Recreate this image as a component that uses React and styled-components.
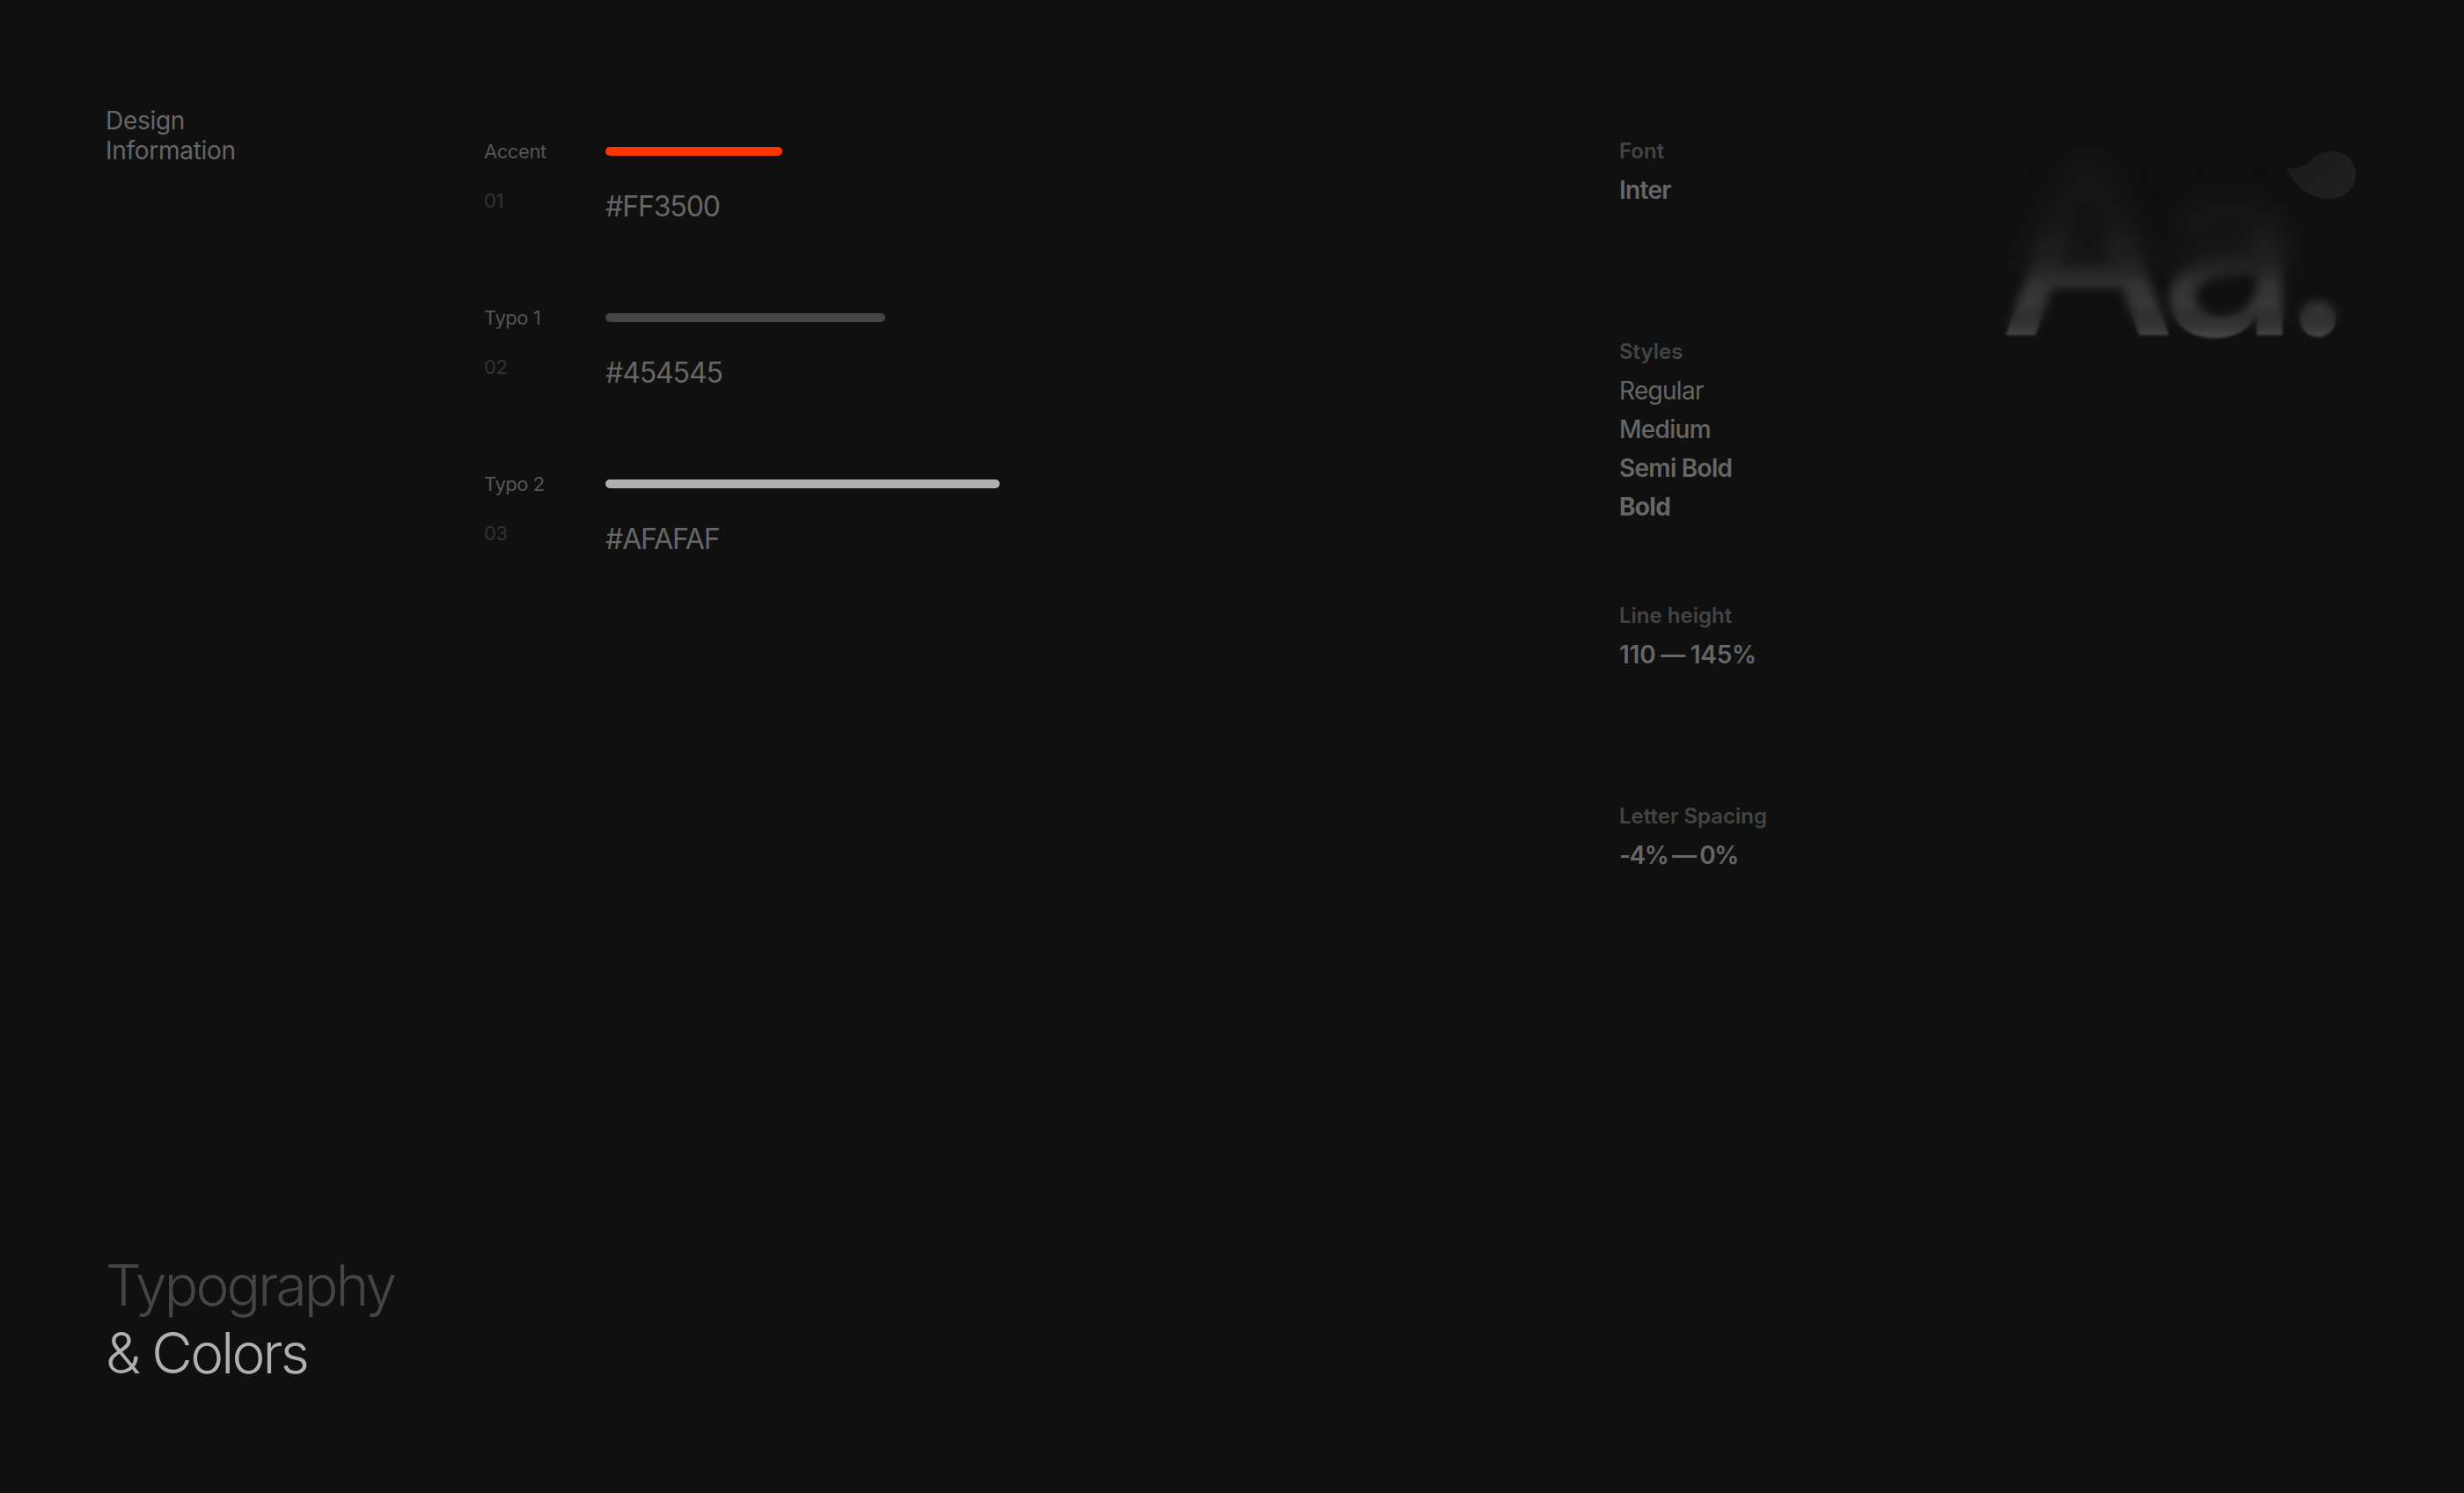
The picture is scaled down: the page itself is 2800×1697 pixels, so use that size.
import styled, { createGlobalStyle } from 'styled-components'

const GlobalStyle = createGlobalStyle`
  html, body {
    margin: 0;
    padding: 0;
    background: #101010;
  }
  body {
    font-family: 'Inter', 'Liberation Sans', sans-serif;
    -webkit-font-smoothing: antialiased;
  }
`

const Page = styled.main`
  display: grid;
  grid-template-columns: 430px 1290px 1fr;
  box-sizing: border-box;
  width: 2800px;
  height: 1697px;
  padding: 120px 0 121px 120px;
  background: #101010;
  overflow: hidden;
`

const IntroColumn = styled.section`
  display: flex;
  flex-direction: column;
  justify-content: space-between;
`

const Eyebrow = styled.h2`
  margin: 0;
  font-size: 28px;
  font-weight: 400;
  line-height: 34px;
  letter-spacing: -0.28px;
  color: #666666;
`

const Title = styled.h1`
  margin: 0;
  font-size: 64px;
  font-weight: 300;
  line-height: 77px;
  letter-spacing: -2.8px;
  color: #454545;

  & span {
    display: block;
    color: #afafaf;
  }
`

const ColorColumn = styled.section`
  display: flex;
  flex-direction: column;
  gap: 80px;
  padding-top: 30px;
`

const ColorRow = styled.div`
  display: grid;
  grid-template-columns: 138px 1fr;
  grid-template-rows: 44px 65px;
`

const RowLabel = styled.div`
  font-size: 22px;
  line-height: 44px;
  letter-spacing: -0.44px;
  color: #555555;
`

const Bar = styled.div`
  align-self: center;
  height: 10px;
  width: ${props => props.$width}px;
  border-radius: 5px;
  background: ${props => props.$color};
`

const RowIndex = styled.div`
  padding-top: 20px;
  font-size: 22px;
  line-height: 28px;
  letter-spacing: -0.44px;
  color: #333333;
`

const HexValue = styled.div`
  padding-top: 21px;
  font-size: 32px;
  line-height: 40px;
  letter-spacing: -1.12px;
  color: #666666;
`

const DetailsColumn = styled.section`
  display: flex;
  align-items: flex-start;
  padding-top: 30px;
`

const DetailList = styled.div`
  flex: 0 0 432px;
`

const DetailGroup = styled.div`
  box-sizing: border-box;
  min-height: 228px;
  padding-bottom: 80px;
`

const DetailLabel = styled.div`
  font-size: 24px;
  font-weight: 600;
  line-height: 44px;
  color: #444444;
`

const DetailValue = styled.div`
  font-size: 28px;
  font-weight: ${props => props.$weight || 600};
  line-height: 44px;
  letter-spacing: -0.7px;
  color: #666666;
`

const RangeValue = styled(DetailValue)`
  letter-spacing: ${props => props.$spacing}px;
  word-spacing: -1px;
`

const Specimen = styled.div`
  position: relative;
  display: grid;
  width: 420px;
  height: 240px;
  margin-top: 9px;
`

const SpecimenText = styled.div`
  grid-area: 1 / 1;
  font-size: 282px;
  font-weight: 500;
  line-height: 240px;
  letter-spacing: -18px;
  white-space: nowrap;
  color: transparent;
  background: linear-gradient(180deg, #131313 0%, #191919 40%, #2c2c2c 60%, #3a3a3a 80%, #484848 100%);
  -webkit-background-clip: text;
  background-clip: text;
  filter: blur(${props => props.$blur}px);
  -webkit-mask-image: linear-gradient(180deg, ${props => props.$mask});
  mask-image: linear-gradient(180deg, ${props => props.$mask});
  user-select: none;

  & span {
    margin-left: -5px;
  }
`

const Droplet = styled.svg`
  position: absolute;
  top: 13px;
  left: 326px;
`

const colors = [
  { label: 'Accent', index: '01', hex: '#FF3500', color: '#ff3500', width: 201 },
  { label: 'Typo 1', index: '02', hex: '#454545', color: '#454545', width: 318 },
  { label: 'Typo 2', index: '03', hex: '#AFAFAF', color: '#afafaf', width: 448 }
]

const styles = [
  { name: 'Regular', weight: 400 },
  { name: 'Medium', weight: 500 },
  { name: 'Semi Bold', weight: 600 },
  { name: 'Bold', weight: 700 }
]

const App = () => (
  <Page>
    <GlobalStyle />
    <IntroColumn>
      <Eyebrow>Design<br />Information</Eyebrow>
      <Title>Typography<span>&amp; Colors</span></Title>
    </IntroColumn>
    <ColorColumn>
      {colors.map(item => (
        <ColorRow key={item.index}>
          <RowLabel>{item.label}</RowLabel>
          <Bar $width={item.width} $color={item.color} />
          <RowIndex>{item.index}</RowIndex>
          <HexValue>{item.hex}</HexValue>
        </ColorRow>
      ))}
    </ColorColumn>
    <DetailsColumn>
      <DetailList>
        <DetailGroup>
          <DetailLabel>Font</DetailLabel>
          <DetailValue>Inter</DetailValue>
        </DetailGroup>
        <DetailGroup>
          <DetailLabel>Styles</DetailLabel>
          {styles.map(item => (
            <DetailValue key={item.name} $weight={item.weight}>{item.name}</DetailValue>
          ))}
        </DetailGroup>
        <DetailGroup>
          <DetailLabel>Line height</DetailLabel>
          <RangeValue $spacing={-0.25}>110 — 145%</RangeValue>
        </DetailGroup>
        <DetailGroup>
          <DetailLabel>Letter Spacing</DetailLabel>
          <RangeValue $spacing={-1.46}>-4% — 0%</RangeValue>
        </DetailGroup>
      </DetailList>
      <Specimen>
        <SpecimenText $blur={16} $mask="#000 0%, #000 50%, transparent 68%">Aa<span>.</span></SpecimenText>
        <SpecimenText $blur={6} $mask="transparent 50%, #000 68%, #000 78%, transparent 92%" aria-hidden="true">Aa<span>.</span></SpecimenText>
        <SpecimenText $blur={1.5} $mask="transparent 78%, #000 92%" aria-hidden="true">Aa<span>.</span></SpecimenText>
        <Droplet width="79" height="54" viewBox="0 0 79 54">
          <defs>
            <linearGradient id="drop" x1="0" y1="0" x2="1" y2="1">
              <stop offset="0" stopColor="#1a1a1a" />
              <stop offset="1" stopColor="#212121" />
            </linearGradient>
          </defs>
          <path d="M0 19C14 20 24 16 30 9C36 3 44 0 52 0C68 0 79 11 79 26C79 42 66 54 49 54C30 54 10 42 0 19Z" fill="url(#drop)" />
        </Droplet>
      </Specimen>
    </DetailsColumn>
  </Page>
)

export default App
